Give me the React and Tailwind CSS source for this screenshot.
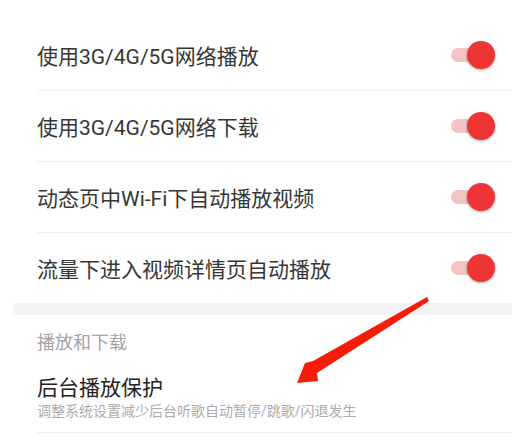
import React from "react";

const rows = [
  "使用3G/4G/5G网络播放",
  "使用3G/4G/5G网络下载",
  "动态页中Wi-Fi下自动播放视频",
  "流量下进入视频详情页自动播放",
];

function Toggle() {
  return (
    <div className="relative w-[44px] h-[28px] mr-[17px] shrink-0">
      <div className="absolute left-0 top-[7px] w-[34px] h-[14px] rounded-full bg-[#f6c3c3]" />
      <div className="absolute right-0 top-0 w-[28px] h-[28px] rounded-full bg-[#ee3535] shadow-[0_1px_3px_rgba(0,0,0,0.35)]" />
    </div>
  );
}

export default function App() {
  return (
    <div
      className="relative w-[525px] h-[440px] bg-white overflow-hidden"
      style={{ fontFamily: 'Roboto, "Noto Sans CJK SC", sans-serif' }}
    >
      <div className="ml-[13px] w-[499px] pt-[20px]">
        {rows.map((text, i) => (
          <div
            key={i}
            className={`ml-[24px] flex items-center justify-between ${i < 3 ? "h-[71px] border-b border-[#efefef]" : "h-[70px]"}`}
          >
            <span className="mt-[4px] text-[21px] text-[#363636] leading-none">{text}</span>
            <Toggle />
          </div>
        ))}

        {/* section gap */}
        <div className="h-[12px] bg-[#f4f4f4]" />

        <div className="ml-[24px]">
          <div className="h-[56px] flex items-center text-[18px] text-[#a3a3a3] leading-none">
            播放和下载
          </div>
          <div className="pt-[2px] pb-[13px] border-b border-[#efefef]">
            <div className="text-[21px] text-[#222222] leading-[30px]">后台播放保护</div>
            <div className="text-[14px] text-[#ababab] leading-[16px]">
              调整系统设置减少后台听歌自动暂停/跳歌/闪退发生
            </div>
          </div>
        </div>
      </div>

      {/* annotation arrow */}
      <svg className="absolute left-0 top-0" width="525" height="440" viewBox="0 0 525 440">
        <polygon
          points="427,297 313,361 305,363 297,383 318,381 317,373 429,301"
          fill="#f51d0a"
        />
      </svg>
    </div>
  );
}
